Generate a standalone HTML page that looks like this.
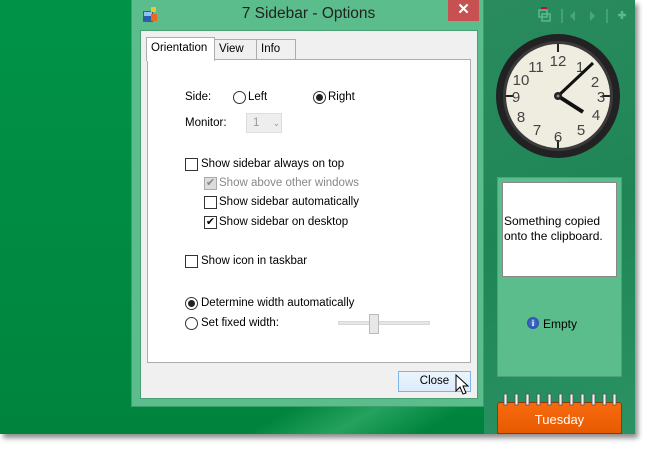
<!DOCTYPE html>
<html><head><meta charset="utf-8"><style>
*{margin:0;padding:0;box-sizing:border-box}
body{width:650px;height:450px;background:#fff;position:relative;overflow:hidden;font-family:"Liberation Sans",sans-serif;font-size:11px;color:#000}
.a{position:absolute}
#desk{left:0;top:0;width:635px;height:434px;background:linear-gradient(180deg,#009347,#00843d);box-shadow:3px 4px 5px rgba(0,0,0,.45)}
#side{left:484px;top:0;width:151px;height:434px;background:linear-gradient(160deg,#2a8c5e,#1f8557 50%,#2a9263)}
#dlg{left:131px;top:0;width:353px;height:407px;background:#5cbd8c;border:1px solid #3f9e6e;border-top:none}
#client{left:8px;top:30px;width:338px;height:369px;background:#f0f0f0;border:1px solid #4a9f74}
.tab{top:8px;height:21px;border:1px solid #adadad;border-bottom:none;background:#f0f0f0;padding:3px 4px 0 4px;font-size:11.5px}
#panel{left:6px;top:28px;width:324px;height:304px;background:#fff;border:1px solid #adadad}
.cb{width:13px;height:13px;border:1px solid #333;background:#fff}
.rb{width:13px;height:13px;border:1px solid #333;border-radius:50%;background:#fff}
.t{font-size:11.5px;white-space:nowrap}
</style></head><body>
<div id="desk" class="a"></div>
<div class="a" style="left:250px;top:320px;width:234px;height:114px;background:linear-gradient(150deg,transparent 45%,rgba(120,230,170,.3) 65%,transparent 85%)"></div>
<div id="side" class="a"></div>
<svg class="a" style="left:530px;top:5px" width="100" height="20">
<rect x="9" y="5" width="8" height="7" fill="none" stroke="#5fb88a" stroke-width="1.5"/><rect x="12" y="9" width="8" height="7" fill="none" stroke="#5fb88a" stroke-width="1.5"/>
<path d="M11 3h6" stroke="#c04" stroke-width="2"/>
<line x1="32" y1="4" x2="32" y2="18" stroke="#5fb88a"/>
<path d="M45 6l-5 5 5 5z" fill="#4aa777"/><path d="M60 6l5 5-5 5z" fill="#4aa777"/>
<line x1="77" y1="4" x2="77" y2="18" stroke="#5fb88a"/>
<path d="M88 10h8M92 6v8" stroke="#5fb88a" stroke-width="2.5"/>
</svg>
<svg class="a" style="left:494px;top:32px" width="128" height="128" viewBox="0 0 128 128">
<circle cx="64" cy="64" r="62" fill="#222"/><circle cx="64" cy="64" r="55" fill="#3a3a3a"/>
<circle cx="64" cy="64" r="52" fill="#efece0"/>
<g stroke="#222" stroke-width="2">
<line x1="64" y1="12" x2="64" y2="20"/><line x1="64" y1="108" x2="64" y2="116"/><line x1="12" y1="64" x2="20" y2="64"/><line x1="108" y1="64" x2="116" y2="64"/></g>
<g font-family="Liberation Sans Narrow, Liberation Sans" font-size="15" fill="#444" text-anchor="middle">
<text x="64" y="34">12</text><text x="86" y="40">1</text><text x="101" y="55">2</text><text x="107" y="70">3</text><text x="102" y="88">4</text><text x="87" y="103">5</text><text x="64" y="110">6</text><text x="43" y="103">7</text><text x="27" y="90">8</text><text x="22" y="70">9</text><text x="27" y="53">10</text><text x="42" y="40">11</text></g>
<line x1="64" y1="64" x2="99" y2="31" stroke="#111" stroke-width="3"/>
<line x1="64" y1="64" x2="89" y2="80" stroke="#111" stroke-width="4"/>
<circle cx="64" cy="64" r="4" fill="#222"/><circle cx="64" cy="64" r="1.5" fill="#888"/>
</svg>
<div class="a" style="left:497px;top:177px;width:125px;height:200px;background:#5cbd8c;border:1px solid #48a578"></div>
<div class="a" style="left:502px;top:182px;width:115px;height:95px;background:#fff;border:1px solid #888"></div>
<div class="a t" style="left:504px;top:214px;font-size:12px;line-height:15px;white-space:normal;width:112px">Something copied onto the clipboard.</div>
<div class="a" style="left:527px;top:317px;width:12px;height:12px;border-radius:50%;background:radial-gradient(#4a7bd8,#1d3f9a);color:#fff;font:bold 9px 'Liberation Serif';text-align:center;line-height:12px">i</div>
<div class="a t" style="left:543px;top:317px;font-size:12px">Empty</div>
<div class="a" style="left:497px;top:402px;width:125px;height:32px;background:linear-gradient(#f76a10,#e85a00);border:1px solid #8a3a00;border-radius:3px 3px 0 0"></div>
<svg class="a" style="left:500px;top:393px" width="120" height="14"><g fill="#eee" stroke="#555" stroke-width=".8">
<rect x="4" y="1" width="3" height="11"/><rect x="15" y="1" width="3" height="11"/><rect x="26" y="1" width="3" height="11"/><rect x="37" y="1" width="3" height="11"/><rect x="48" y="1" width="3" height="11"/><rect x="59" y="1" width="3" height="11"/><rect x="70" y="1" width="3" height="11"/><rect x="81" y="1" width="3" height="11"/><rect x="92" y="1" width="3" height="11"/><rect x="103" y="1" width="3" height="11"/><rect x="113" y="1" width="3" height="11"/></g></svg>
<div class="a" style="left:497px;top:412px;width:125px;text-align:center;color:#fff;font-size:13px">Tuesday</div>

<div id="dlg" class="a">
 <svg class="a" style="left:10px;top:6px" width="18" height="18"><rect x="1" y="5" width="10" height="11" fill="#2b5fa8"/><rect x="2" y="6" width="8" height="4" fill="#8ec3f0"/><rect x="9" y="1" width="5" height="5" fill="#f3c22a"/><rect x="9" y="8" width="6" height="7" fill="#e86a20"/></svg>
 <div class="a" style="left:0;width:353px;top:5px;text-align:center;font-size:15.5px;color:#222">7 Sidebar - Options</div>
 <div class="a" style="left:316px;top:0;width:31px;height:21px;background:#c75050;color:#fff;text-align:center;font-size:15px;line-height:20px;font-weight:bold">✕</div>
 <div id="client" class="a">
  <div class="a tab" style="left:73px;width:43px">View</div>
  <div class="a tab" style="left:115px;width:40px">Info</div>
  <div id="panel" class="a"></div>
  <div class="a tab" style="left:5px;top:6px;height:24px;width:69px;background:#fff;padding-top:4px;z-index:2">Orientation</div>
  <div class="a" style="left:6px;top:28px;width:324px;height:304px">
   <div class="a t" style="left:38px;top:32px">Side:</div>
   <div class="a rb" style="left:86px;top:32px"></div><div class="a t" style="left:101px;top:32px">Left</div>
   <div class="a rb" style="left:166px;top:32px"><div style="margin:2px;width:7px;height:7px;border-radius:50%;background:#222"></div></div><div class="a t" style="left:181px;top:32px">Right</div>
   <div class="a t" style="left:38px;top:58px">Monitor:</div>
   <div class="a" style="left:99px;top:54px;width:36px;height:20px;background:#eee;border:1px solid #ddd;color:#999;padding:3px 0 0 6px;font-size:11.5px">1 <span style="margin-left:10px;font-size:9px">&#8964;</span></div>
   <div class="a cb" style="left:38px;top:99px"></div><div class="a t" style="left:54px;top:99px">Show sidebar always on top</div>
   <div class="a cb" style="left:57px;top:118px;background:#ddd;border-color:#aaa;color:#888;font-size:11px;line-height:11px;text-align:center">✔</div><div class="a t" style="left:72px;top:118px;color:#888">Show above other windows</div>
   <div class="a cb" style="left:57px;top:137px"></div><div class="a t" style="left:72px;top:137px">Show sidebar automatically</div>
   <div class="a cb" style="left:57px;top:157px;font-size:11px;line-height:11px;text-align:center">✔</div><div class="a t" style="left:72px;top:157px">Show sidebar on desktop</div>
   <div class="a cb" style="left:38px;top:196px"></div><div class="a t" style="left:54px;top:196px">Show icon in taskbar</div>
   <div class="a rb" style="left:38px;top:238px"><div style="margin:2px;width:7px;height:7px;border-radius:50%;background:#222"></div></div><div class="a t" style="left:54px;top:238px">Determine width automatically</div>
   <div class="a rb" style="left:38px;top:258px"></div><div class="a t" style="left:54px;top:258px">Set fixed width:</div>
   <div class="a" style="left:191px;top:262px;width:92px;height:4px;background:#e5e5e5;border:1px solid #d8d8d8"></div>
   <div class="a" style="left:222px;top:255px;width:10px;height:20px;background:#e8e8e8;border:1px solid #bbb"></div>
  </div>
  <div class="a" style="left:257px;top:340px;width:73px;height:21px;background:linear-gradient(#eaf4fc,#dcecfc);border:1px solid #7eb4ea;text-align:center;font-size:11.5px;padding-top:3px">Close</div>
  <svg class="a" style="left:314px;top:343px" width="14" height="22"><path d="M1 1v16l4-4 3 7 3-1-3-7h5z" fill="#fff" stroke="#000" stroke-width="1"/></svg>
 </div>
</div>
</body></html>
